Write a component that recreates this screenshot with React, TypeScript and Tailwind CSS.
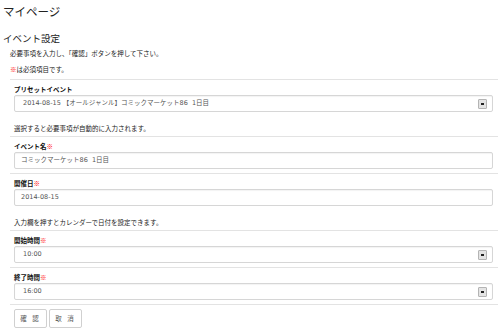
import React from "react";

const font = { fontFamily: '"Noto Sans CJK JP", "Noto Sans", sans-serif' };
const valueFont = { fontFamily: '"DejaVu Sans", "Noto Sans CJK JP", sans-serif' };

function Req() {
  return <span className="font-bold text-[#ff0000]">※</span>;
}

function DropIcon() {
  return (
    <span className="flex h-[10px] w-[9px] items-center justify-center rounded-[1px] border border-[#b4b4b4] bg-[#e4e4e4]">
      <span className="block h-[2px] w-[3px] bg-[#222]" />
    </span>
  );
}

function Field({
  label,
  required,
  value,
  select,
  help,
}: {
  label: string;
  required?: boolean;
  value: string;
  select?: boolean;
  help?: string;
}) {
  return (
    <div className="border-t border-[#e3e3e3] pl-[4px] pr-[5px] pt-[4px] pb-[4px]">
      <div className="h-[10px] text-[6.5px] font-bold leading-[10px] text-[#111]">
        {label}
        {required && <Req />}
      </div>
      <div
        className={
          select
            ? "mt-[1px] flex h-[17px] items-center justify-between rounded-[2px] border border-[#d6d6d6] bg-white pl-[8px] pr-[5px] text-[6.5px] text-[#555] shadow-[inset_0_1px_1px_rgba(0,0,0,0.05)]"
            : "mt-[1px] flex h-[17px] items-center justify-between rounded-[2px] border border-[#d6d6d6] bg-white pl-[6px] pr-[5px] text-[6.5px] text-[#555] shadow-[inset_0_1px_1px_rgba(0,0,0,0.05)]"
        }
      >
        <span className="whitespace-pre" style={valueFont}>
          {value}
        </span>
        {select && <DropIcon />}
      </div>
      {help && (
        <div className="mt-[11px] mb-[-1px] h-[10px] text-[6.5px] leading-[10px] text-[#222]">{help}</div>
      )}
    </div>
  );
}

export default function App() {
  return (
    <div className="h-[332px] w-[500px] overflow-hidden bg-white text-[#222]" style={font}>
      <div className="pl-[3px] pt-[3px] text-[11.5px] leading-[16px] text-[#222]">マイページ</div>
      <div className="mt-[13px] pl-[3px] text-[9.5px] leading-[12px] text-[#222]">イベント設定</div>
      <div className="pl-[10px] pr-[2px]">
        <div className="mt-[4px] h-[10px] text-[6.5px] leading-[10px]">必要事項を入力し、「確認」ボタンを押して下さい。</div>
        <div className="mt-[6px] h-[10px] text-[6.5px] leading-[10px]">
          <Req />は必須項目です。
        </div>
        <div className="mt-[5px]">
          <Field
            label="プリセットイベント"
            value="2014-08-15 【オールジャンル】コミックマーケット86  1日目"
            select
            help="選択すると必要事項が自動的に入力されます。"
          />
          <Field label="イベント名" required value="コミックマーケット86  1日目" />
          <Field
            label="開催日"
            required
            value="2014-08-15"
            help="入力欄を押すとカレンダーで日付を設定できます。"
          />
          <Field label="開始時間" required value="10:00" select />
          <Field label="終了時間" required value="16:00" select />
          <div className="flex gap-[2px] border-t border-[#e3e3e3] pl-[4px] pt-[4px]">
            <button className="h-[19px] w-[33px] rounded-[2px] border border-[#d0d0d0] bg-white text-[6.5px] tracking-[2px] text-[#555]">
              確 認
            </button>
            <button className="h-[19px] w-[33px] rounded-[2px] border border-[#d0d0d0] bg-white text-[6.5px] tracking-[2px] text-[#555]">
              取 消
            </button>
          </div>
        </div>
      </div>
    </div>
  );
}
